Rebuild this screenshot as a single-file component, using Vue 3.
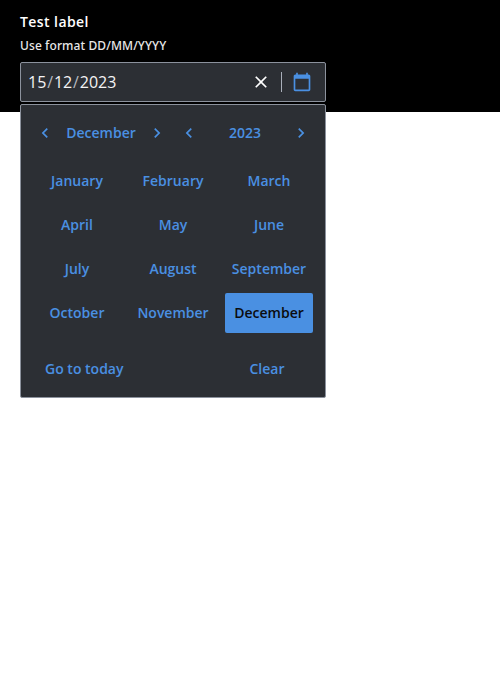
<script setup>
import { ref } from 'vue'

const months = ['January', 'February', 'March', 'April', 'May', 'June', 'July', 'August', 'September', 'October', 'November', 'December']
const selected = ref('December')
const year = ref(2023)
</script>

<template>
  <main class="page">
    <div class="field">
      <label class="label">Test label</label>
      <span class="helper">Use format DD/MM/YYYY</span>
      <div class="input">
        <div class="date"><span>15</span><i>/</i><span>12</span><i>/</i><span>2023</span></div>
        <button class="clear" aria-label="Clear">
          <svg viewBox="0 0 24 24" width="20" height="20"><path d="M19 6.41 17.59 5 12 10.59 6.41 5 5 6.41 10.59 12 5 17.59 6.41 19 12 13.41 17.59 19 19 17.59 13.41 12z" /></svg>
        </button>
        <span class="divider"></span>
        <button class="calendar" aria-label="Calendar">
          <svg viewBox="0 0 24 24" width="20" height="20"><path d="M20 3h-1V1h-2v2H7V1H5v2H4c-1.1 0-2 .9-2 2v16c0 1.1.9 2 2 2h16c1.1 0 2-.9 2-2V5c0-1.1-.9-2-2-2zm0 18H4V8h16v13z" /></svg>
        </button>
      </div>
      <section class="popup">
        <div class="nav">
          <template v-for="title in [selected, year]" :key="title">
            <button aria-label="Previous"><svg viewBox="0 0 24 24" width="20" height="20"><path d="M15.41 7.41 14 6l-6 6 6 6 1.41-1.41L10.83 12z" /></svg></button>
            <button class="title">{{ title }}</button>
            <button aria-label="Next"><svg viewBox="0 0 24 24" width="20" height="20"><path d="M10 6 8.59 7.41 13.17 12l-4.58 4.59L10 18l6-6z" /></svg></button>
          </template>
        </div>
        <div class="months">
          <button v-for="m in months" :key="m" :class="{ active: m === selected }" @click="selected = m">{{ m }}</button>
        </div>
        <div class="actions">
          <button class="today">Go to today</button>
          <button class="reset">Clear</button>
        </div>
      </section>
    </div>
  </main>
</template>

<style>
body {
  background: #fff;
}
</style>

<style scoped>
.page {
  height: 700px;
}
.field {
  position: relative;
  box-sizing: border-box;
  height: 112px;
  padding: 10px 20px;
  background: #000;
  color: #fff;
  font-family: 'Open Sans', sans-serif;
}
.label {
  display: block;
  font-size: 14px;
  line-height: 24px;
  font-weight: 600;
  letter-spacing: 0.42px;
}
.helper {
  display: block;
  margin-bottom: 4px;
  font-family: 'Noto Sans', sans-serif;
  font-size: 12px;
  line-height: 24px;
  font-weight: 500;
  letter-spacing: 0.1px;
  color: #e8e8e8;
}
.input {
  display: flex;
  align-items: center;
  box-sizing: border-box;
  width: 306px;
  height: 40px;
  padding: 0 7px;
  border: 1px solid #8c929d;
  border-radius: 2px;
  background: #2c2f34;
}
.date {
  display: flex;
  flex: 1;
  font-size: 16px;
  line-height: 24px;
  color: #f4f4f5;
}
.date i {
  width: 7.6px;
  text-align: center;
  font-style: normal;
  color: #b5b9c0;
}
button {
  display: flex;
  align-items: center;
  justify-content: center;
  height: 40px;
  padding: 0;
  border: 0;
  border-radius: 2px;
  background: none;
  color: #4a90e2;
  font: 600 14px/24px 'Open Sans', sans-serif;
}
svg {
  display: block;
  fill: currentColor;
}
.clear {
  width: 40px;
  color: #fff;
}
.divider {
  width: 1px;
  height: 20px;
  background: #a9afba;
}
.calendar {
  width: 36px;
  padding-left: 4px;
}
.popup {
  position: absolute;
  top: 104px;
  left: 20px;
  box-sizing: border-box;
  width: 306px;
  height: 294px;
  padding: 8px;
  border: 1px solid #8c929d;
  border-radius: 2px;
  background: #2c2f34;
}
.nav {
  display: grid;
  grid-template-columns: 32px 80px 32px 32px 80px 32px;
}
.months {
  display: grid;
  grid-template-columns: repeat(3, 88px);
  gap: 4px 8px;
  padding: 8px 4px 16px;
}
.months .active {
  background: #4a90e2;
  color: #0b0c0f;
}
.actions {
  display: flex;
  justify-content: space-between;
}
.today {
  padding: 0 16px;
}
.reset {
  width: 100px;
}
</style>
